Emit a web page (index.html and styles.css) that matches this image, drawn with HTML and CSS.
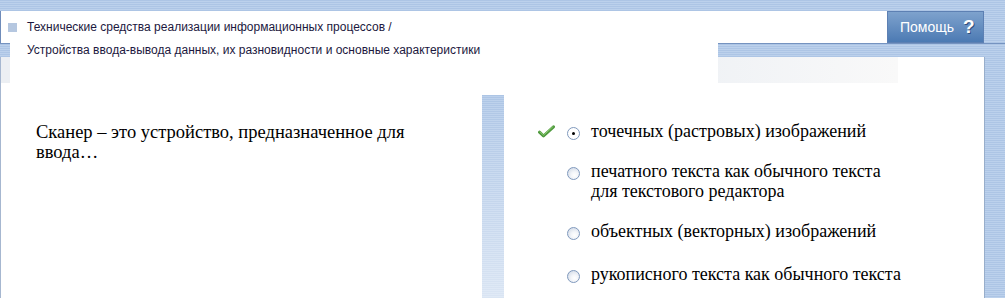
FILE: index.html
```html
<!DOCTYPE html>
<html lang="ru">
<head>
  <meta charset="UTF-8">
  <title>Тест: Устройства ввода-вывода данных</title>
  <link rel="stylesheet" href="styles.css">
</head>
<body>
  <div class="page">
    <div class="top-strip"></div>

    <div class="header">
      <div class="crumbs">
        <span class="bullet"></span>
        <span class="crumb">Технические средства реализации информационных процессов /</span>
        <div class="crumb-sub">Устройства ввода-вывода данных, их разновидности и основные характеристики</div>
      </div>
      <a class="help" href="#">Помощь <span class="help-q">?</span></a>
    </div>

    <div class="tab-strip"></div>

    <div class="panel">
      <div class="panel-band"></div>
      <div class="content">
        <div class="question">Сканер – это устройство, предназначенное для ввода…</div>
        <div class="divider"></div>
        <ul class="answers">
          <li class="answer">
            <span class="mark">
              <svg width="17" height="13" viewBox="0 0 17 13">
                <path d="M1.5 7.2 L5.5 11 L15.5 1.8" fill="none" stroke="#4f9a3e" stroke-width="3" stroke-linecap="round" stroke-linejoin="round"/>
                <path d="M2 6.8 L5.5 10.2 L15 1.6" fill="none" stroke="#8cc970" stroke-width="1" stroke-linecap="round"/>
              </svg>
            </span>
            <span class="radio checked"></span>
            <span class="answer-text">точечных (растровых) изображений</span>
          </li>
          <li class="answer">
            <span class="mark"></span>
            <span class="radio"></span>
            <span class="answer-text">печатного текста как обычного текста для текстового редактора</span>
          </li>
          <li class="answer">
            <span class="mark"></span>
            <span class="radio"></span>
            <span class="answer-text">объектных (векторных) изображений</span>
          </li>
          <li class="answer last">
            <span class="mark"></span>
            <span class="radio"></span>
            <span class="answer-text">рукописного текста как обычного текста</span>
          </li>
        </ul>
      </div>
    </div>
  </div>
</body>
</html>
```

FILE: styles.css
```css
body {
  margin: 0;
  background: #fff;
}
.page {
  width: 1005px;
  height: 298px;
  overflow: hidden;
  background: repeating-linear-gradient(to bottom, #adc5e5 0 1px, #bcd1ec 1px 2px);
}
.top-strip {
  height: 11px;
}

/* header: breadcrumbs + help button */
.header {
  display: flex;
  height: 32px;
}
.crumbs {
  position: relative;
  width: 886px;
  background: #fff;
  border-left: 1px solid #6f8cba;
  display: flex;
  align-items: center;
  font-family: "Liberation Sans", Arial, sans-serif;
  font-size: 12px;
  color: #1c1840;
  z-index: 2;
}
.bullet {
  width: 9px;
  height: 9px;
  margin: 0 10px 0 7px;
  background: #b5c7e0;
}
.crumb-sub {
  position: absolute;
  left: 9px;
  top: 32px;
  width: 708px;
  height: 42px;
  padding-left: 17px;
  line-height: 15px;
  background: #fff;
  box-sizing: border-box;
}
.help {
  width: 97px;
  border: 1px solid #5d80b3;
  background: linear-gradient(to bottom, #7ea2cd, #4c7ab3);
  color: #fff;
  text-decoration: none;
  font-family: "Liberation Sans", Arial, sans-serif;
  font-size: 14px;
  display: flex;
  align-items: center;
  padding-left: 12px;
  box-sizing: border-box;
}
.help-q {
  margin-left: 9px;
  font-size: 19px;
  font-weight: bold;
  text-shadow: 1px 1px 0 #2f4f7e;
}

.tab-strip {
  height: 14px;
  border-top: 1px solid #7593c0;
  box-sizing: border-box;
}

/* main white panel */
.panel {
  width: 985px;
  height: 241px;
  background: #fff;
  border-left: 1px solid #a6b7d0;
  border-right: 1px solid #98aecb;
  box-sizing: border-box;
}
.panel-band {
  width: 897px;
  height: 26px;
  background: linear-gradient(to right, #eceff3, #eef1f5 75%, #f9f9f9);
}
.content {
  display: flex;
  height: 215px;
}
.question {
  width: 481px;
  box-sizing: border-box;
  padding: 39px 60px 0 35px;
  font-family: "Liberation Serif", "Times New Roman", serif;
  font-size: 18.5px;
  line-height: 20px;
  color: #000;
}
.divider {
  width: 22px;
  margin-top: 12px;
  background:
    linear-gradient(to bottom, rgba(255,255,255,0), rgba(255,255,255,0.55)),
    repeating-linear-gradient(to bottom, #adc5e5 0 1px, #bcd1ec 1px 2px);
}
.answers {
  list-style: none;
  margin: 0;
  padding: 38px 0 0 34px;
  display: flex;
  flex-direction: column;
  gap: 20px;
  font-family: "Liberation Serif", "Times New Roman", serif;
  font-size: 18px;
  line-height: 20px;
  color: #000;
}
.answer {
  display: flex;
  align-items: flex-start;
}
.answer.last {
  margin-top: 3px;
}
.mark {
  width: 17px;
  height: 13px;
  margin: 4px 12px 0 0;
}
.mark svg {
  display: block;
}
.radio {
  width: 11px;
  height: 11px;
  margin: 6px 11px 0 0;
  border: 1px solid #8099bd;
  border-radius: 50%;
  background: radial-gradient(circle at 60% 65%, #fff 0, #f3f5f9 35%, #c9d3e2 100%);
  position: relative;
}
.radio.checked {
  background: #fff;
}
.radio.checked::after {
  content: "";
  position: absolute;
  left: 4px;
  top: 4px;
  width: 3px;
  height: 3px;
  background: #000;
  border-radius: 50%;
}
.answer-text {
  width: 320px;
}
```
